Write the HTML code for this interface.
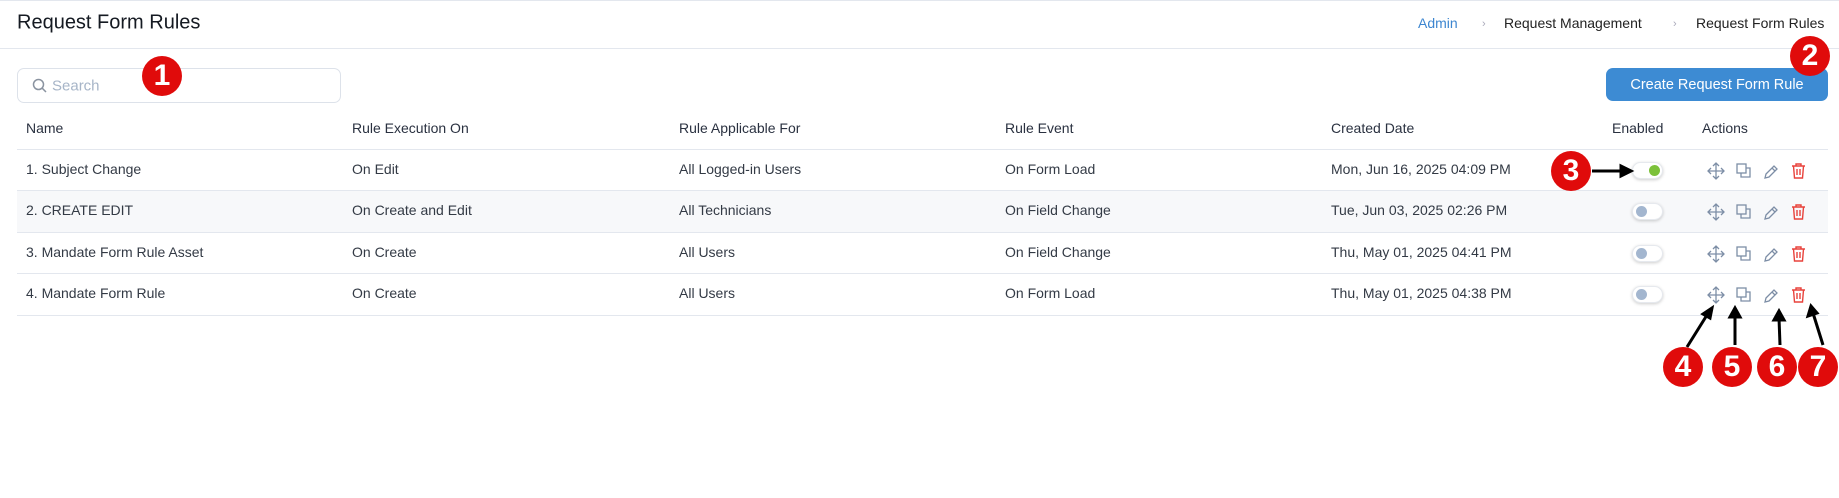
<!DOCTYPE html>
<html><head><style>
*{margin:0;padding:0;box-sizing:border-box}
body{width:1839px;height:498px;background:#fff;font-family:"Liberation Sans",sans-serif;color:#2a2f3a;position:relative;overflow:hidden}
.a{position:absolute;white-space:nowrap}
.t{font-size:14px;color:#333a45;transform:translateY(-50%)}
.h{font-size:14px;color:#2a3140;transform:translateY(-50%)}
.line{position:absolute;left:17px;width:1811px;height:1px;background:#e3e7ee}
.badge{position:absolute;width:40px;height:40px;border-radius:50%;background:#e00b0b;color:#fff;font:bold 30px "Liberation Sans",sans-serif;display:flex;align-items:center;justify-content:center;transform:translate(-50%,-50%)}
.tog{position:absolute;left:1632px;width:31px;height:17px;border-radius:9px;background:#fff;box-shadow:0 1px 3px rgba(0,0,0,.2);border:1px solid #e6e9ee}
.tog i{position:absolute;top:2px;left:3px;width:11px;height:11px;border-radius:50%;background:#a3b6cf}
.ic{position:absolute}
</style></head><body>
<div class="a" style="left:0;top:0;width:1839px;height:1px;background:#e3e7ee"></div>
<div class="a" style="left:17px;top:23px;font-size:20px;color:#151a22;transform:translateY(-50%)">Request Form Rules</div>
<div class="a t" style="left:1418px;top:23px;color:#3d86d0">Admin</div>
<div class="a t" style="left:1482px;top:24px;color:#aab;font-size:11px">›</div>
<div class="a t" style="left:1504px;top:23px;color:#222">Request Management</div>
<div class="a t" style="left:1673px;top:24px;color:#aab;font-size:11px">›</div>
<div class="a t" style="left:1696px;top:23px;color:#222">Request Form Rules</div>
<div class="a" style="left:0;top:48px;width:1839px;height:1px;background:#e3e7ee"></div>
<div class="a" style="left:17px;top:68px;width:324px;height:35px;border:1px solid #dde2ea;border-radius:7px"></div>
<svg class="ic" style="left:32px;top:78px" width="15" height="15" viewBox="0 0 15 15"><circle cx="6.5" cy="6.5" r="5" fill="none" stroke="#8a93a0" stroke-width="1.5"/><path d="M10.2 10.2L14 14" stroke="#8a93a0" stroke-width="1.5"/></svg>
<div class="a t" style="left:52px;top:86px;color:#a7b5c8;font-size:15px">Search</div>
<div class="a" style="left:1606px;top:68px;width:222px;height:33px;background:#3d8bd3;border-radius:7px;color:#fff;font-size:14.5px;display:flex;align-items:center;justify-content:center">Create Request Form Rule</div>
<div class="a h" style="left:26px;top:128px">Name</div>
<div class="a h" style="left:352px;top:128px">Rule Execution On</div>
<div class="a h" style="left:679px;top:128px">Rule Applicable For</div>
<div class="a h" style="left:1005px;top:128px">Rule Event</div>
<div class="a h" style="left:1331px;top:128px">Created Date</div>
<div class="a h" style="left:1612px;top:128px">Enabled</div>
<div class="a h" style="left:1702px;top:128px">Actions</div>
<div class="a" style="left:17px;top:191px;width:1811px;height:41px;background:#f7f8fa"></div>
<div class="line" style="top:149px"></div><div class="line" style="top:190px"></div><div class="line" style="top:232px"></div><div class="line" style="top:273px"></div><div class="line" style="top:315px"></div>

<div class="a t" style="left:26px;top:169px">1. Subject Change</div><div class="a t" style="left:352px;top:169px">On Edit</div><div class="a t" style="left:679px;top:169px">All Logged-in Users</div><div class="a t" style="left:1005px;top:169px">On Form Load</div><div class="a t" style="left:1331px;top:169px">Mon, Jun 16, 2025 04:09 PM</div>
<div class="a t" style="left:26px;top:210px">2. CREATE EDIT</div><div class="a t" style="left:352px;top:210px">On Create and Edit</div><div class="a t" style="left:679px;top:210px">All Technicians</div><div class="a t" style="left:1005px;top:210px">On Field Change</div><div class="a t" style="left:1331px;top:210px">Tue, Jun 03, 2025 02:26 PM</div>
<div class="a t" style="left:26px;top:252px">3. Mandate Form Rule Asset</div><div class="a t" style="left:352px;top:252px">On Create</div><div class="a t" style="left:679px;top:252px">All Users</div><div class="a t" style="left:1005px;top:252px">On Field Change</div><div class="a t" style="left:1331px;top:252px">Thu, May 01, 2025 04:41 PM</div>
<div class="a t" style="left:26px;top:293px">4. Mandate Form Rule</div><div class="a t" style="left:352px;top:293px">On Create</div><div class="a t" style="left:679px;top:293px">All Users</div><div class="a t" style="left:1005px;top:293px">On Form Load</div><div class="a t" style="left:1331px;top:293px">Thu, May 01, 2025 04:38 PM</div>

<div class="tog" style="top:162px"><i style="left:16px;background:#7cc13a"></i></div>
<div class="tog" style="top:203px"><i></i></div>
<div class="tog" style="top:245px"><i></i></div>
<div class="tog" style="top:286px"><i></i></div>

<svg class="a" style="left:0;top:0" width="1839" height="498">
<defs>
<g id="row">
<g stroke="#7d8ea6" stroke-width="1.3" fill="none">
<path d="M1716 163v16M1708 171h16M1713 166l3-3 3 3M1713 176l3 3 3-3M1711 168l-3 3 3 3M1721 168l3 3-3 3"/>
<rect x="1737" y="164" width="9" height="9"/><path d="M1746 168h4v9h-9v-4"/>
<path d="M1765 178l1-4 8-8 3 3-8 8z M1772 168l3 3"/>
</g>
<g stroke="#e8423b" stroke-width="1.4" fill="none">
<path d="M1792 166h13M1796 166v-2h5v2M1793.5 166l1 12h8l1-12M1797 169v6M1800 169v6"/>
</g>
</g>
</defs>
<use href="#row"/><use href="#row" y="41"/><use href="#row" y="83"/><use href="#row" y="124"/>
<g stroke="#000" stroke-width="3" fill="#000">
<path d="M1592 171h30"/><path d="M1631 171l-10-5v10z"/>
<path d="M1687 347L1707 315"/><path d="M1712 308l-9 6 7 4z"/>
<path d="M1735 345v-30"/><path d="M1735 308l-5 9h10z"/>
<path d="M1780 345l-1-27"/><path d="M1779 311l-5 9h10z"/>
<path d="M1823 345l-10-32"/><path d="M1811 306l-3 10 9-3z"/>
</g>
</svg>
<div class="badge" style="left:162px;top:76px">1</div>
<div class="badge" style="left:1810px;top:56px">2</div>
<div class="badge" style="left:1571px;top:171px">3</div>
<div class="badge" style="left:1683px;top:367px">4</div>
<div class="badge" style="left:1732px;top:367px">5</div>
<div class="badge" style="left:1777px;top:367px">6</div>
<div class="badge" style="left:1818px;top:367px">7</div>
</body></html>
